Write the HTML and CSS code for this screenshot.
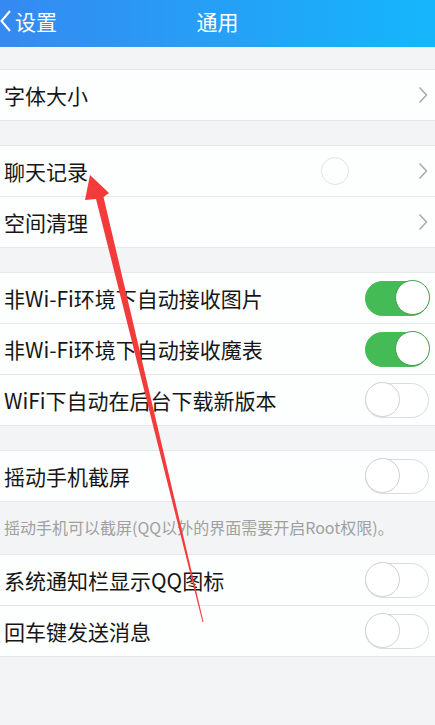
FILE: index.html
```html
<!DOCTYPE html>
<html lang="zh-CN">
<head>
    <meta charset="UTF-8">
    <title>通用</title>
    <link rel="stylesheet" href="styles.css">
</head>
<body>
    <div class="header">
        <div class="back">
            <svg width="12" height="22" viewBox="0 0 12 22"><path d="M10 1 L1.5 11 L10 21" fill="none" stroke="#fff" stroke-width="2"/></svg>
            <span>设置</span>
        </div>
        <div class="title">通用</div>
    </div>

    <div class="group first">
        <div class="row">
            <span class="label">字体大小</span>
            <svg class="chevron" width="10" height="18" viewBox="0 0 10 18"><path d="M1.5 1.5 L8.5 9 L1.5 16.5" fill="none" stroke="#a9a9a9" stroke-width="1.5"/></svg>
        </div>
    </div>

    <div class="group">
        <div class="row">
            <span class="label">聊天记录</span>
            <span class="spinner"></span>
            <svg class="chevron" width="10" height="18" viewBox="0 0 10 18"><path d="M1.5 1.5 L8.5 9 L1.5 16.5" fill="none" stroke="#a9a9a9" stroke-width="1.5"/></svg>
        </div>
        <div class="row">
            <span class="label">空间清理</span>
            <svg class="chevron" width="10" height="18" viewBox="0 0 10 18"><path d="M1.5 1.5 L8.5 9 L1.5 16.5" fill="none" stroke="#a9a9a9" stroke-width="1.5"/></svg>
        </div>
    </div>

    <div class="group">
        <div class="row">
            <span class="label">非Wi-Fi环境下自动接收图片</span>
            <span class="switch on"></span>
        </div>
        <div class="row">
            <span class="label">非Wi-Fi环境下自动接收魔表</span>
            <span class="switch on"></span>
        </div>
        <div class="row">
            <span class="label">WiFi下自动在后台下载新版本</span>
            <span class="switch"></span>
        </div>
    </div>

    <div class="group">
        <div class="row">
            <span class="label">摇动手机截屏</span>
            <span class="switch"></span>
        </div>
    </div>
    <div class="note">摇动手机可以截屏(QQ以外的界面需要开启Root权限)。</div>

    <div class="group flush">
        <div class="row">
            <span class="label">系统通知栏显示QQ图标</span>
            <span class="switch"></span>
        </div>
        <div class="row">
            <span class="label">回车键发送消息</span>
            <span class="switch"></span>
        </div>
    </div>

    <!-- flecha roja de la captura -->
    <svg class="arrow" width="435" height="725" viewBox="0 0 435 725">
        <polygon points="90,175 109,193 103.5,197 203.5,622 202.5,622 96,199 85,200" fill="#f43b3b"/>
    </svg>
</body>
</html>
```

FILE: styles.css
```css
body {
    margin: 0;
    min-height: 725px;
    background-color: #f3f4f5;
    font-family: "Noto Sans CJK SC", "Noto Sans", sans-serif;
    color: #161616;
    position: relative;
    overflow: hidden;
}

.header {
    height: 47px;
    background: linear-gradient(to right, #3689f1, #15b6fc);
    color: #fff;
    font-size: 21px;
    display: flex;
    align-items: center;
    justify-content: center;
    position: relative;
    padding-bottom: 6px;
    box-sizing: border-box;
}

.back {
    position: absolute;
    left: 0;
    top: 8px;
    display: flex;
    align-items: center;
    gap: 3px;
}

.back span {
    line-height: 26px;
}

.title {
    line-height: 26px;
}

.group {
    margin-top: 24px;
    background-color: #fdfefe;
    border-top: 1px solid #e5e6e7;
}

.group.first {
    margin-top: 22px;
}

.group.flush {
    margin-top: 0;
}

.row {
    height: 51px;
    box-sizing: border-box;
    border-bottom: 1px solid #e5e6e7;
    display: flex;
    align-items: center;
    padding: 0 6px 0 4px;
}

.label {
    flex: 1;
    font-size: 21px;
    line-height: 26px;
}

.chevron {
    margin-right: 1px;
}

.spinner {
    width: 26px;
    height: 26px;
    border: 1.5px solid #e2e3e4;
    border-radius: 50%;
    margin-right: 69px;
}

.switch {
    width: 64px;
    height: 35px;
    box-sizing: border-box;
    border: 1.5px solid #dcdcdc;
    border-radius: 18px;
    background-color: #fff;
    position: relative;
}

.switch::after {
    content: "";
    position: absolute;
    top: -1.5px;
    left: -1.5px;
    width: 35px;
    height: 35px;
    box-sizing: border-box;
    border: 1.5px solid #d0d0d0;
    border-radius: 50%;
    background-color: #fff;
}

.switch.on {
    background-color: #45bb55;
    border-color: #45bb55;
}

.switch.on::after {
    left: auto;
    right: -1.5px;
    border-color: #3f9c4a;
}

.note {
    height: 52px;
    padding-left: 4px;
    font-size: 16px;
    line-height: 50px;
    color: #a0a0a0;
}

.arrow {
    position: absolute;
    left: 0;
    top: 0;
    pointer-events: none;
}
```
